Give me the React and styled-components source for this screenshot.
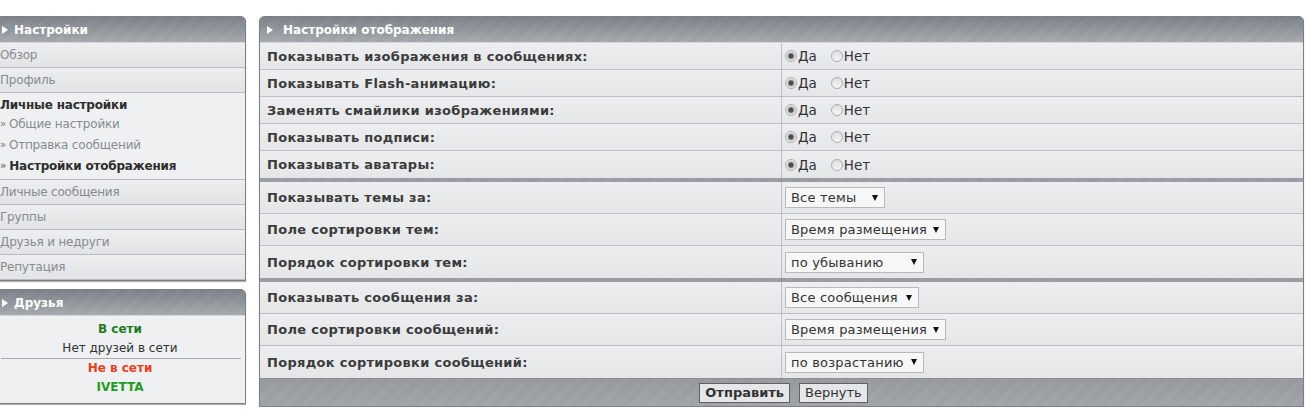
import React from 'react'
import styled, { createGlobalStyle } from 'styled-components'

const GlobalStyle = createGlobalStyle`
  html, body {
    margin: 0;
    padding: 0;
    background: #ffffff;
  }
  body {
    font-family: "DejaVu Sans", Verdana, sans-serif;
    color: #333;
    overflow: hidden;
  }
`

// shared textures
const stripes = `
  repeating-linear-gradient(
    135deg,
    rgba(255, 255, 255, 0.05) 0px,
    rgba(255, 255, 255, 0.05) 1px,
    rgba(0, 0, 0, 0.035) 1px,
    rgba(0, 0, 0, 0.035) 2px
  )
`

const Page = styled.div`
  display: flex;
  align-items: flex-start;
  gap: 13px;
  padding-top: 16px;
  margin-left: -6px;
`

const Sidebar = styled.div`
  width: 252px;
  flex: none;
  display: flex;
  flex-direction: column;
  gap: 8px;
`

const Panel = styled.div`
  border: 1px solid #7b8086;
  border-radius: 5px 5px 0 0;
  background: #e6e8e9;
  box-shadow: 0 1px 1px rgba(0, 0, 0, 0.35);
  overflow: hidden;
`

const MainPanel = styled(Panel)`
  width: 1043px;
  flex: none;
`

const Header = styled.div`
  height: 25px;
  display: flex;
  align-items: center;
  gap: ${p => p.$gap || 6}px;
  padding-left: 7px;
  color: #fff;
  font-weight: bold;
  font-size: 12px;
  background: ${stripes}, linear-gradient(to bottom, #7c8288, #a7abb0);
  border-bottom: 1px solid #d4d6d8;
`

const Arrow = styled.span`
  width: 0;
  height: 0;
  border-top: 4.5px solid transparent;
  border-bottom: 4.5px solid transparent;
  border-left: 6px solid #fff;
`

const NavItem = styled.div`
  height: 24px;
  display: flex;
  align-items: center;
  padding-left: 5px;
  font-size: 12px;
  letter-spacing: -0.2px;
  color: #888c90;
  background: linear-gradient(to bottom, #eceeef, #e1e3e4);
  border-bottom: 1px solid #b9bcbf;
`

const NavGroup = styled.div`
  padding: 3px 0 3px 5px;
  background: #eef0f1;
  border-bottom: 1px solid #b9bcbf;
`

const GroupTitle = styled.div`
  font-size: 12px;
  font-weight: bold;
  letter-spacing: -0.2px;
  color: #2e2e2e;
  height: 17px;
  display: flex;
  align-items: center;
`

const SubItem = styled.div`
  height: 21px;
  display: flex;
  align-items: center;
  gap: 3px;
  font-size: 12px;
  letter-spacing: -0.2px;
  font-weight: ${p => (p.$active ? 'bold' : 'normal')};
  color: ${p => (p.$active ? '#2e2e2e' : '#888c90')};
`

const Bullet = styled.span`
  font-size: 10px;
  color: #777;
`

const FriendsBody = styled.div`
  display: flex;
  flex-direction: column;
  align-items: center;
  padding: 4px 0 6px;
  background: #eef0f1;
  font-size: 12px;
`

const FriendLine = styled.div`
  height: 19px;
  line-height: 19px;
  font-weight: ${p => (p.$bold ? 'bold' : 'normal')};
  color: ${p => p.$color || '#333'};
`

const FriendDivider = styled.div`
  align-self: stretch;
  margin: 0 4px 0 6px;
  border-top: 1px solid #a8abae;
`

const Row = styled.div`
  display: grid;
  grid-template-columns: 522px 1fr;
  height: ${p => p.$h}px;
  border-bottom: 1px solid #bdc0c3;
  background: linear-gradient(to bottom, #eceeef, #e4e6e7);
  box-sizing: border-box;
  &:last-child {
    border-bottom: none;
  }
`

const Label = styled.div`
  display: flex;
  align-items: center;
  padding-left: 7px;
  font-size: 13px;
  font-weight: bold;
  letter-spacing: 0.3px;
  color: #3b3b3b;
  border-right: 1px solid #bdc0c3;
`

const Value = styled.div`
  display: flex;
  align-items: center;
  padding-left: 3px;
  font-size: 13.5px;
  color: #333;
`

const Separator = styled.div`
  height: 4px;
  background: ${stripes}, #9a9ea3;
`

const RadioOption = styled.label`
  display: flex;
  align-items: center;
  margin-right: 14px;
`

const RadioDot = styled.span`
  width: 10px;
  height: 10px;
  border-radius: 50%;
  border: 1px solid #a9acaf;
  background: ${p =>
    p.$checked
      ? 'radial-gradient(circle, #444 0, #555 2px, #c8cacc 3.5px, #f4f4f4 5px)'
      : 'linear-gradient(to bottom, #dcdee0, #f6f6f6)'};
  margin-right: 1px;
`

const SelectBox = styled.div`
  display: flex;
  align-items: center;
  justify-content: space-between;
  box-sizing: border-box;
  width: ${p => p.$w}px;
  height: 21px;
  padding: 0 6px 0 5px;
  border: 1px solid #b7babd;
  background: #f7f7f7;
  font-size: 13px;
  color: #333;
  letter-spacing: 0.2px;
`

const Caret = styled.span`
  width: 0;
  height: 0;
  border-left: 3px solid transparent;
  border-right: 3px solid transparent;
  border-top: 6px solid #111;
`

const Footer = styled.div`
  height: 27px;
  display: flex;
  justify-content: center;
  align-items: center;
  gap: 9px;
  padding-left: 4px;
  background: ${stripes}, linear-gradient(to bottom, #979ba0, #a2a6ab);
  border-top: 1px solid #8a8e93;
`

const Button = styled.button`
  font-family: "DejaVu Sans", Verdana, sans-serif;
  font-size: 13px;
  font-weight: ${p => (p.$primary ? 'bold' : 'normal')};
  color: #333;
  background: #e4e6e7;
  border: 1px solid #5f6368;
  height: 20px;
  padding: 0 5px;
  line-height: 18px;
`

const Radio = ({ checked, children }) => (
  <RadioOption>
    <RadioDot $checked={checked} />
    {children}
  </RadioOption>
)

const YesNo = () => (
  <>
    <Radio checked>Да</Radio>
    <Radio>Нет</Radio>
  </>
)

const radioRows = [
  'Показывать изображения в сообщениях:',
  'Показывать Flash-анимацию:',
  'Заменять смайлики изображениями:',
  'Показывать подписи:',
  'Показывать аватары:'
]

const topicRows = [
  { label: 'Показывать темы за:', value: 'Все темы', w: 100 },
  { label: 'Поле сортировки тем:', value: 'Время размещения', w: 161 },
  { label: 'Порядок сортировки тем:', value: 'по убыванию', w: 139 }
]

const postRows = [
  { label: 'Показывать сообщения за:', value: 'Все сообщения', w: 134 },
  { label: 'Поле сортировки сообщений:', value: 'Время размещения', w: 161 },
  { label: 'Порядок сортировки сообщений:', value: 'по возрастанию', w: 139 }
]

const SelectRows = ({ rows }) =>
  rows.map(r => (
    <Row key={r.label} $h={32}>
      <Label>{r.label}</Label>
      <Value>
        <SelectBox $w={r.w}>
          {r.value}
          <Caret />
        </SelectBox>
      </Value>
    </Row>
  ))

const App = () => (
  <>
    <GlobalStyle />
    <Page>
      <Sidebar>
        <Panel>
          <Header>
            <Arrow />
            Настройки
          </Header>
          <NavItem>Обзор</NavItem>
          <NavItem>Профиль</NavItem>
          <NavGroup>
            <GroupTitle>Личные настройки</GroupTitle>
            <SubItem>
              <Bullet>»</Bullet>Общие настройки
            </SubItem>
            <SubItem>
              <Bullet>»</Bullet>Отправка сообщений
            </SubItem>
            <SubItem $active>
              <Bullet>»</Bullet>Настройки отображения
            </SubItem>
          </NavGroup>
          <NavItem>Личные сообщения</NavItem>
          <NavItem>Группы</NavItem>
          <NavItem>Друзья и недруги</NavItem>
          <NavItem>Репутация</NavItem>
        </Panel>
        <Panel>
          <Header>
            <Arrow />
            Друзья
          </Header>
          <FriendsBody>
            <FriendLine $bold $color="#1f7a1f">В сети</FriendLine>
            <FriendLine>Нет друзей в сети</FriendLine>
            <FriendDivider />
            <FriendLine $bold $color="#e8401c">Не в сети</FriendLine>
            <FriendLine $bold $color="#1f9a1f">IVETTA</FriendLine>
          </FriendsBody>
        </Panel>
      </Sidebar>

      <MainPanel>
        <Header $gap={10}>
          <Arrow />
          Настройки отображения
        </Header>
        <div>
          {radioRows.map(label => (
            <Row key={label} $h={27}>
              <Label>{label}</Label>
              <Value>
                <YesNo />
              </Value>
            </Row>
          ))}
        </div>
        <Separator />
        <div>
          <SelectRows rows={topicRows} />
        </div>
        <Separator />
        <div>
          <SelectRows rows={postRows} />
        </div>
        <Footer>
          <Button $primary>Отправить</Button>
          <Button>Вернуть</Button>
        </Footer>
      </MainPanel>
    </Page>
  </>
)

export default App
